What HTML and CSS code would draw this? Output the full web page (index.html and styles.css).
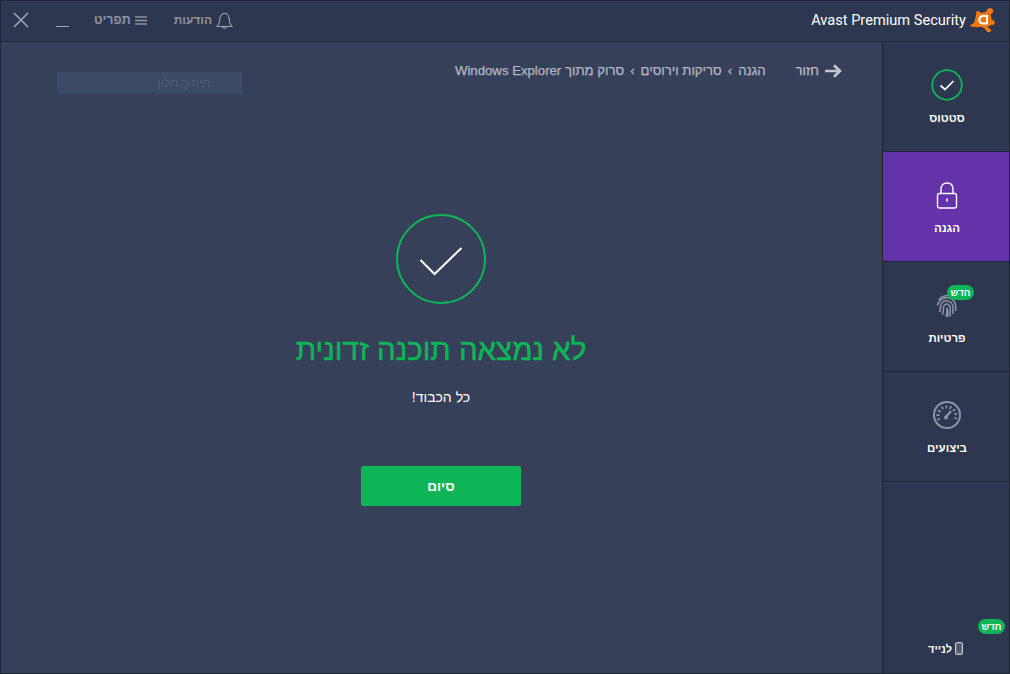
FILE: index.html
```html
<!DOCTYPE html>
<html lang="he">
<head>
<meta charset="utf-8">
<title>Avast Premium Security</title>
<link rel="stylesheet" href="styles.css">
</head>
<body>
<div class="app">
  <header class="titlebar">
    <div class="controls">
      <svg class="ic-close" width="16" height="16" viewBox="0 0 16 16"><path d="M1 1l14 14M15 1L1 15" stroke="#a2a7b3" stroke-width="1.5" fill="none"/></svg>
      <span class="ic-min"></span>
      <span class="tb-btn menu-btn"><span>תפריט</span>
        <svg width="12" height="9" viewBox="0 0 12 9"><path d="M0 1h12M0 4.500h12M0 8h12" stroke="#8d93a1" stroke-width="1.400"/></svg>
      </span>
      <span class="tb-btn bell-btn"><span>הודעות</span>
        <svg width="17" height="17" viewBox="0 0 17 17"><path d="M1 14.500c1.600-1.400 2.300-3 2.500-5.200C3.800 5 4.700 1.300 8.500 1.300s4.700 3.700 5 8c.2 2.200.9 3.800 2.500 5.200zM6.500 14.500c0 2.400 4 2.400 4 0" stroke="#9ca1ae" stroke-width="1.100" fill="none"/></svg>
      </span>
    </div>
    <div class="brand">
      <span class="brand-name">Avast Premium Security</span>
      <svg width="25" height="26" viewBox="0 0 25 26"><path d="M16.500 4.500C17 1.500 20.500.2 22.300 1.800c1.800 1.700.9 4.700-1.800 5.400.8 1.800 1.100 3.800.9 5.600 1.500.1 2.900.9 3.300 2.200.5 1.800-1.300 3.400-3.200 2.800-1.400 1.200-3 1.800-4.600 1.900 1.100 1 2.900 1.500 3.700 2.500 1 1.500-.2 3.300-2 3.100-2-.2-2.600-2.200-3.800-3.600-1.500-1.400-3.400-1.800-5.500-1.600-2.600.2-5.300.1-7.800-.7C.2 19.200 0 18 1 17.500c1.500-.6 2.900-1 3.400-2.700L6.300 7C5.700 5 6.700 3.500 8.200 4c1.300.4 2.300 1.400 3.300 1.900 1.700-.5 3.700-.4 5-1.400z" fill="#f4780f"/><path d="M17 9v7.500h-4.500a3.800 3.800 0 0 1 0-7.500z" stroke="#fff" stroke-width="1.900" fill="none"/></svg>
    </div>
  </header>
  <div class="body">
    <main class="content">
      <div class="toprow">
        <div class="snip">חיתוך חלון</div>
        <nav class="crumbs">
          <span class="path">
            <span>הגנה</span><i>›</i><span>סריקות וירוסים</span><i>›</i><span>סרוק מתוך Windows Explorer</span>
          </span>
          <span class="back"><span>חזור</span>
            <svg width="17" height="14" viewBox="0 0 17 14"><path d="M0 7h14.500M9 1.200L15 7l-6 5.800" stroke="#c4c7ce" stroke-width="2.600" fill="none"/></svg>
          </span>
        </nav>
      </div>
      <section class="result">
        <svg class="big-check" width="90" height="90" viewBox="0 0 90 90"><circle cx="45" cy="45" r="44" stroke="#0db556" stroke-width="2" fill="none"/><path d="M24.500 46L38.500 60L65.500 34" stroke="#fff" stroke-width="2" fill="none"/></svg>
        <h1>לא נמצאה תוכנה זדונית</h1>
        <p>כל הכבוד!</p>
        <button class="finish">סיום</button>
      </section>
    </main>
    <aside class="sidebar">
      <div class="nav-item">
        <svg width="32" height="32" viewBox="0 0 32 32"><circle cx="16" cy="16" r="14.800" stroke="#0db556" stroke-width="1.800" fill="none"/><path d="M9.500 16.500l4.500 4 8.500-8.500" stroke="#fff" stroke-width="1.700" fill="none"/></svg>
        <span>סטטוס</span>
      </div>
      <div class="nav-item active">
        <svg width="22" height="27" viewBox="0 0 22 27"><rect x="1.500" y="11.500" width="19" height="14.500" rx="2" stroke="#fff" stroke-width="1.400" fill="none"/><path d="M5 11.500V7.500C5 3.500 7.300 1 11 1s6 2.500 6 6.500v4" stroke="#fff" stroke-width="1.400" fill="none"/><path d="M11 16.500v3" stroke="#fff" stroke-width="1.600"/></svg>
        <span>הגנה</span>
      </div>
      <div class="nav-item">
        <svg width="22" height="27" viewBox="0 0 24 28"><g stroke="#8e94a3" stroke-width="1.700" fill="none"><path d="M3 8C6 3 15 1 20 6"/><path d="M1.500 14C3 8 8 5 12.500 5.500S21 9 21.500 15v5"/><path d="M4 21c1-3 .5-6 1.500-8 1.500-3.500 4-4.500 7-4s6 3 6 7v7"/><path d="M7 24c1.200-3.500 1-6.500 1.500-9 .6-2 2.500-3 4-2.500s3 2 3 4.500v9"/><path d="M11 26c1-3 1-6.500 1-9.500 1.500 3 1 6 .8 10"/></g></svg>
        <span>פרטיות</span>
        <b class="badge badge-print">חדש</b>
      </div>
      <div class="nav-item">
        <svg width="28" height="28" viewBox="0 0 28 28"><circle cx="14" cy="14" r="13" stroke="#8e94a3" stroke-width="2" fill="none"/><path d="M6 19a9 9 0 1 1 16 0" stroke="#8e94a3" stroke-width="3" stroke-dasharray="1.700 2.500" fill="none"/><path d="M13 16l5-6" stroke="#8e94a3" stroke-width="2.200"/><circle cx="13" cy="16.500" r="2" fill="#8e94a3"/></svg>
        <span>ביצועים</span>
      </div>
      <div class="spacer"></div>
      <div class="mobile">
        <b class="badge badge-mobile">חדש</b>
        <span class="mobile-label">
          <span>לנייד</span>
          <svg width="8" height="13" viewBox="0 0 8 13"><rect x=".5" y=".5" width="7" height="12" rx="1" stroke="#c5c8cf" fill="#6f7687"/><path d="M2 3h4M2 5h4M2 7h4M2 9h4" stroke="#2c3650"/></svg>
        </span>
      </div>
    </aside>
  </div>
</div>
</body>
</html>
```

FILE: styles.css
```css
* { box-sizing: border-box; }
html, body { margin: 0; padding: 0; height: 100%; background: #2e3750; }
body { font-family: "Liberation Sans", Arial, sans-serif; overflow: hidden; }
.app { width: 1010px; height: 674px; border: 1px solid #1e2538; display: flex; flex-direction: column; background: #374059; }

.titlebar { height: 41px; flex: none; display: flex; justify-content: space-between; align-items: center; background: #2e3750; border-bottom: 1px solid #1e2538; padding: 0 14px 2px 12px; }
.controls { display: flex; align-items: center; }
.ic-close { display: block; }
.ic-min { width: 13px; height: 1px; background: #a2a7b3; margin: 13px 0 0 27px; align-self: center; }
.tb-btn { display: flex; align-items: center; gap: 4px; font-size: 12.500px; font-weight: 700; color: #8d93a1; }
.menu-btn { margin-left: 25px; }
.bell-btn { margin-left: 27px; font-size: 12px; }
.brand { display: flex; align-items: center; gap: 4px; }
.brand-name { font-family: Roboto, sans-serif; font-size: 14.600px; color: #fff; }

.body { flex: 1; display: flex; min-height: 0; }
.content { flex: 1; display: flex; flex-direction: column; align-items: center; min-width: 0; }
.toprow { width: 100%; display: flex; justify-content: space-between; padding: 20px 40px 0 56px; height: 52px; }
.snip { width: 185px; height: 22px; margin-top: 10px; padding-right: 32px; background: #3d4a66; color: #525c76; font-size: 12px; text-align: right; line-height: 22px; direction: rtl; }
.crumbs { display: flex; align-items: flex-start; gap: 30px; height: 20px; font-size: 13.200px; color: #b4b7c0; -webkit-text-stroke: .25px #b4b7c0; }
.path { display: flex; direction: rtl; gap: 6px; line-height: 17px; }
.path i { font-style: normal; }
.back { display: flex; align-items: center; gap: 6px; line-height: 17px; color: #c0c3ca; }

.result { display: flex; flex-direction: column; align-items: center; padding: 120px 1px 0 0; }
.big-check { display: block; }
.result h1 { margin: 28px 0 0; font-size: 29.500px; line-height: 36px; font-weight: 400; color: #0db556; direction: rtl; -webkit-text-stroke: .5px #0db556; }
.result p { margin: 20px 0 0; font-size: 14px; line-height: 18px; color: #fff; direction: rtl; }
.finish { margin-top: 60px; width: 160px; height: 40px; border: 0; border-radius: 2px; background: #0db556; color: #fff; font: 700 13.500px "Liberation Sans", Arial, sans-serif; }

.sidebar { width: 127px; flex: none; display: flex; flex-direction: column; background: #2e3750; border-left: 1px solid #1e2538; }
.nav-item { position: relative; height: 110px; flex: none; display: flex; flex-direction: column; align-items: center; border-bottom: 1px solid #1e2538; padding: 0 0 23px 2px; justify-content: center; }
.nav-item svg { display: block; }
.nav-item span { position: absolute; top: 68px; left: 2px; right: 0; text-align: center; font-size: 11.500px; font-weight: 700; color: #fff; line-height: 16px; direction: rtl; }
.nav-item.active { background: #6533a9; }
.spacer { flex: 1; }
.badge { position: absolute; display: block; width: 27px; height: 15px; border-radius: 8px; background: #0db556; color: #fff; font-size: 9.500px; line-height: 15px; text-align: center; direction: rtl; }
.badge-print { top: 23px; left: 64px; }
.mobile { position: relative; height: 58px; flex: none; }
.badge-mobile { top: 4px; left: 95px; }
.mobile-label { position: absolute; top: 27px; left: 45px; display: flex; align-items: center; gap: 3px; font-size: 11px; font-weight: 700; color: #fff; direction: ltr; }
```
